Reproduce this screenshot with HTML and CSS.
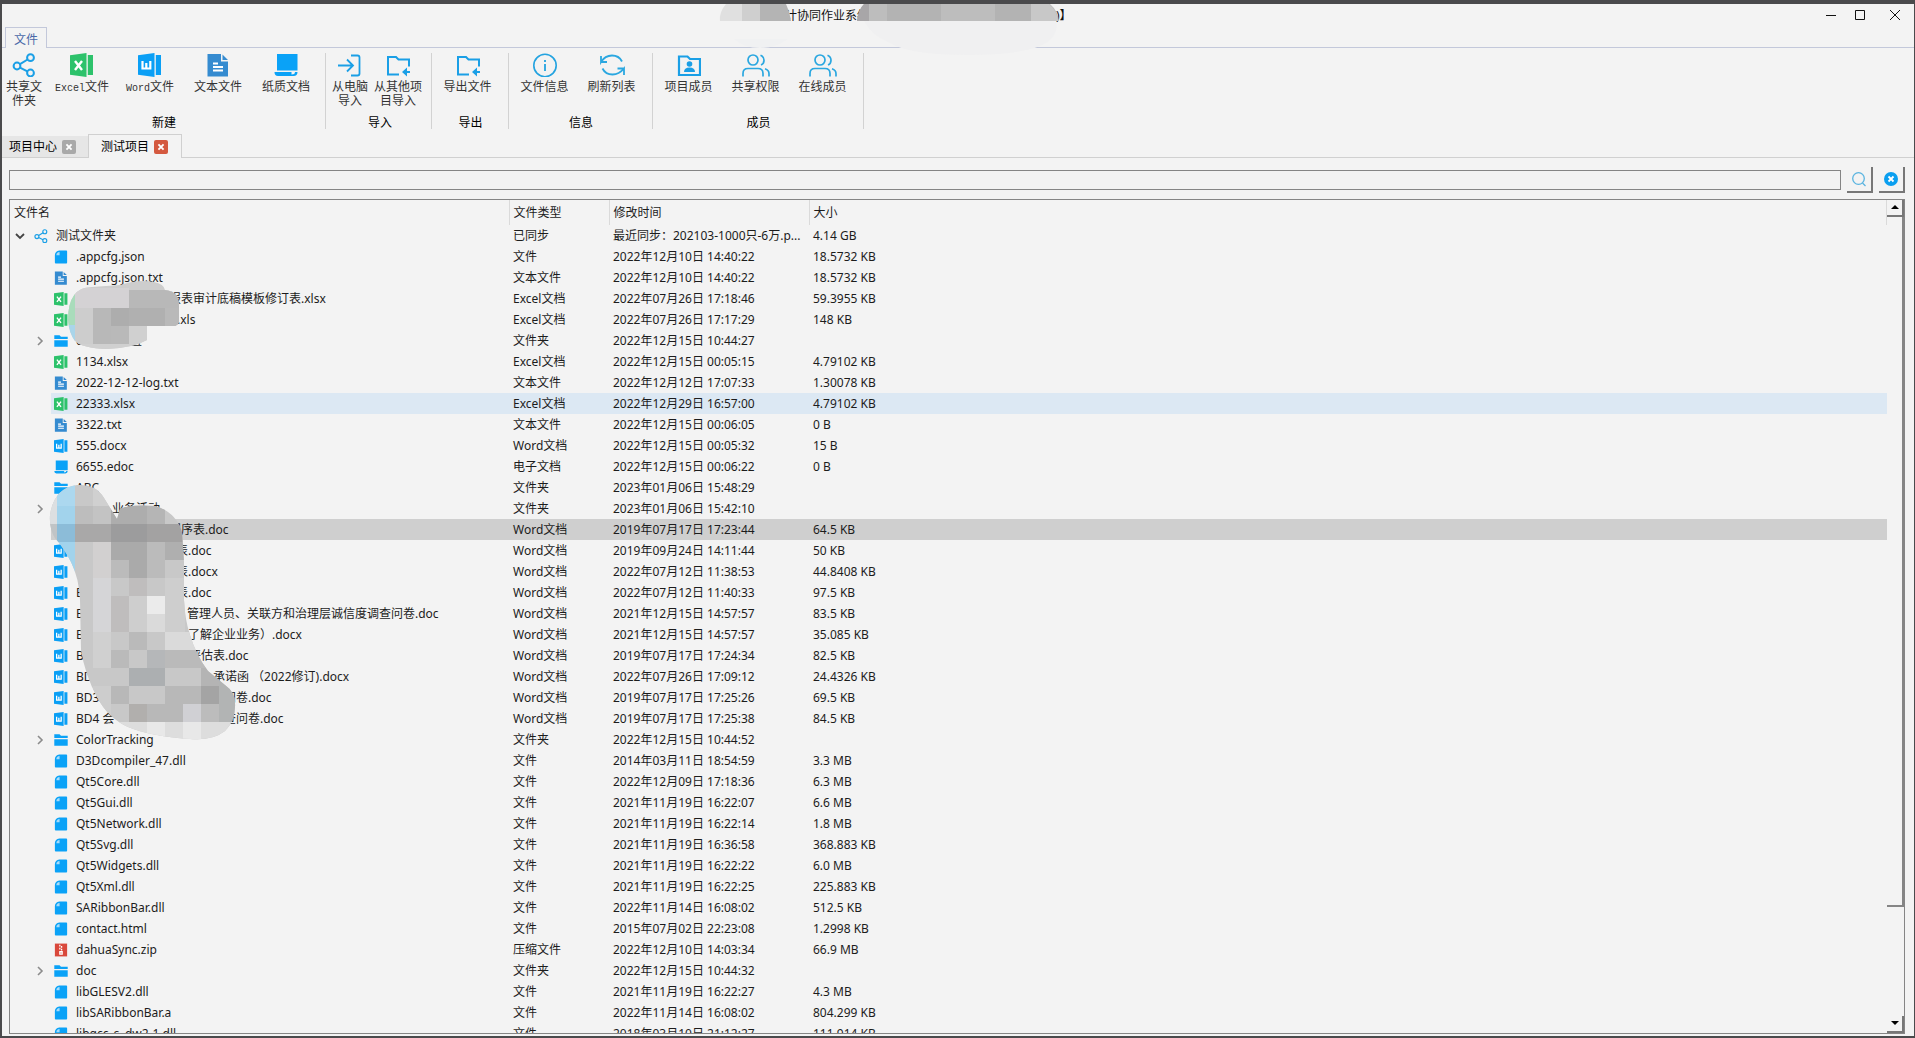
FILE: index.html
```html
<!DOCTYPE html>
<html lang="zh-CN">
<head>
<meta charset="utf-8">
<title>协同作业系统</title>
<link rel="stylesheet" href="styles.css">
</head>
<body>
<svg class="sprite" aria-hidden="true">
  <symbol id="share" viewBox="0 0 24 24"><g fill="none" stroke="#1a9fe6" stroke-width="2"><circle cx="18.5" cy="4.7" r="3.4"/><circle cx="5" cy="13" r="3.4"/><circle cx="18.5" cy="20" r="3.4"/><path d="M8 11.2l7.6-4.7M8 14.6l7.4 3.8"/></g></symbol>
  <symbol id="excel" viewBox="0 0 24 24"><path fill="#2dc26b" d="M0 2.2L16.5 0v24L0 21.8zM17.8 2H23v20h-5.2z"/><path fill="none" stroke="#fff" stroke-width="2.4" d="M5 8l7 9M12 8l-7 9"/></symbol>
  <symbol id="word" viewBox="0 0 24 24"><path fill="#0a9ff5" d="M0 2.2L16.5 0v24L0 21.8zM17.8 2H23v20h-5.2z"/><path fill="none" stroke="#fff" stroke-width="2.2" d="M4.500 8v7.500h3.800v-5.500 5.500h4V8"/></symbol>
  <symbol id="text" viewBox="0 0 24 24"><path fill="#358bd0" d="M1.5 1H15v7.5h7V23.500H1.500zM16.500 1.500L22 7h-5.500z"/><path stroke="#fff" stroke-width="2" d="M7 10.500h5M7 14h10M7 17.500h10"/></symbol>
  <symbol id="paper" viewBox="0 0 24 24"><path fill="#0aa2f7" d="M3 1h20.500v16.500H3zM.5 19h17v2.500q3.500 0 3.500-2.500h2.500q0 4-4 4H4Q.5 23 .5 19z"/></symbol>
  <symbol id="file" viewBox="0 0 24 24"><path fill="#0aa2f7" d="M9 1h12q1.500 0 1.500 1.500v19q0 1.500-1.500 1.500H3q-1.500 0-1.500-1.500V8.500Q2 2 9 1z"/><path fill="#a4dcfb" d="M4 9Q4 4 9.500 3.500V9z"/></symbol>
  <symbol id="folder" viewBox="0 0 24 24"><path fill="#0aa2f7" d="M.5 2h9l2.500 2.500h11.500v4H.5zM.5 10.500h23V22H.5z"/></symbol>
  <symbol id="zip" viewBox="0 0 24 24"><path fill="#d9483b" d="M1.500 1h21v22h-21z"/><path fill="none" stroke="#fff" stroke-width="2.200" d="M10 3v3M13 5v3M10 8v3M13 10v3M10 15h4v4h-4z"/></symbol>
  <symbol id="import" viewBox="0 0 24 24"><g fill="none" stroke="#1a9fe6" stroke-width="1.800"><path d="M0 12.500h14M9 6.500l6 6-6 6M13 2.500h6.500q2 0 2 2v16q0 2-2 2H13"/></g></symbol>
  <symbol id="folder-arrow" viewBox="0 0 24 24"><path fill="none" stroke="#1a9fe6" stroke-width="2" d="M13 21.500H2V4h8l2.500 2.500H23v7"/><path fill="#1a9fe6" d="M16 19l5-4.500V18h3.500v2H21v3.500z"/></symbol>
  <symbol id="info" viewBox="0 0 24 24"><circle cx="12" cy="12.500" r="11.200" fill="none" stroke="#23a3e0" stroke-width="1.600"/><path stroke="#23a3e0" stroke-width="1.800" d="M12 11v7M12 7v2"/></symbol>
  <symbol id="refresh" viewBox="0 0 26 24"><g fill="none" stroke="#2aa7e0" stroke-width="1.800"><path d="M23 8.500Q20 2.500 13 2.500 6 2.500 2 9V3M2 9h6M3.500 15.500Q6.500 21.500 13.500 21.500 20 21.500 25 15.500V22M25 15.500h-6.500"/></g></symbol>
  <symbol id="member" viewBox="0 0 24 24"><path fill="none" stroke="#1a9fe6" stroke-width="2.200" d="M2 22V3.500h8.500L13 6h10v16z"/><circle cx="12.500" cy="11" r="2.800" fill="#1a9fe6"/><path fill="#1a9fe6" d="M7 19q0-4.500 5.500-4.500T18 19z"/></symbol>
  <symbol id="people" viewBox="0 0 28 24"><g fill="none" stroke="#2aa7e0" stroke-width="1.700"><circle cx="11" cy="7" r="5"/><path d="M1 23.500v-3q0-5 5-5h10q5 0 5 5v3M18.500 2.200q3.500 1.500 3.500 5t-3 4.800M23 15.800q4 1.200 4 5v2.700"/></g></symbol>
  <symbol id="x" viewBox="0 0 14 14"><path stroke="#fff" stroke-width="2.200" d="M4 4l6 6M10 4l-6 6"/></symbol>
  <symbol id="right" viewBox="0 0 10 10"><path fill="none" stroke="#8c8c8c" stroke-width="1.600" d="M3 1l4 4-4 4"/></symbol>
  <symbol id="down" viewBox="0 0 10 10"><path fill="none" stroke="#444" stroke-width="1.800" d="M1 3l4 4 4-4"/></symbol>
</svg>

<div class="window">
  <header class="titlebar">
    <h1 class="title">
      <svg class="title-mosaic" width="65" height="44" viewBox="0 0 65 44" aria-hidden="true">
        <path fill="#e0e0e0" d="M6 0q-7 8-6 17h22V0z"/><path fill="#cfcfcf" d="M22 0h18v17H22z"/><path fill="#b4b4b4" d="M40 0h26q4 8 5 17H40z"/>
        <path fill="#f0f1f2" d="M14 35h54q-12 9-28 9t-26-9z"/>
      </svg>
      <span>计协同作业系统</span>
      <svg class="title-mosaic over" width="198" height="50" viewBox="0 0 198 50" aria-hidden="true">
        <path fill="#bdbdbd" d="M6 0h186q8 7 9 17H-1Q0 6 6 0z"/><path fill="#a8a6a8" d="M6 0h5v17H-1Q0 6 6 0z"/><path fill="#b3b3b3" d="M29 0h54v17H29zM137 0h36v17h-36z"/><path fill="#c8c8c8" d="M173 0h18q8 7 9 17h-27z"/>
        <path fill="#f0f0f1" d="M6 17h192q3 12-8 21-20 13-80 13T30 38Q14 32 6 17z"/>
      </svg>
      <span>)】</span>
    </h1>
    <div class="window-buttons">
      <button type="button" aria-label="最小化"><svg width="12" height="12"><path stroke="#111" d="M1 6.500h10"/></svg></button>
      <button type="button" aria-label="最大化"><svg width="12" height="12"><path fill="none" stroke="#111" d="M1.500 1.500h9v9h-9z"/></svg></button>
      <button type="button" class="close" aria-label="关闭"><svg width="12" height="12"><path stroke="#111" d="M1 1l10 10M11 1L1 11"/></svg></button>
    </div>
  </header>
  <nav class="ribbon-tabs"><button type="button" class="ribbon-tab">文件</button></nav>

  <div class="ribbon">
    <section class="group">
      <div class="tools">
        <button type="button" class="tool narrow"><svg class="icon"><use href="#share"/></svg><span>共享文件夹</span></button>
        <button type="button" class="tool wide"><svg class="icon"><use href="#excel"/></svg><span><span class="mono">Excel</span>文件</span></button>
        <button type="button" class="tool wide"><svg class="icon"><use href="#word"/></svg><span><span class="mono">Word</span>文件</span></button>
        <button type="button" class="tool wide"><svg class="icon"><use href="#text"/></svg><span>文本文件</span></button>
        <button type="button" class="tool wide"><svg class="icon"><use href="#paper"/></svg><span>纸质文档</span></button>
      </div>
      <h2>新建</h2>
    </section>
    <section class="group import">
      <div class="tools">
        <button type="button" class="tool short"><svg class="icon"><use href="#import"/></svg><span>从电脑导入</span></button>
        <button type="button" class="tool"><svg class="icon"><use href="#folder-arrow"/></svg><span>从其他项目导入</span></button>
      </div>
      <h2>导入</h2>
    </section>
    <section class="group">
      <div class="tools">
        <button type="button" class="tool medium"><svg class="icon"><use href="#folder-arrow"/></svg><span>导出文件</span></button>
      </div>
      <h2>导出</h2>
    </section>
    <section class="group">
      <div class="tools">
        <button type="button" class="tool medium"><svg class="icon"><use href="#info"/></svg><span>文件信息</span></button>
        <button type="button" class="tool medium"><svg class="icon broad"><use href="#refresh"/></svg><span>刷新列表</span></button>
      </div>
      <h2>信息</h2>
    </section>
    <section class="group">
      <div class="tools">
        <button type="button" class="tool medium"><svg class="icon"><use href="#member"/></svg><span>项目成员</span></button>
        <button type="button" class="tool medium"><svg class="icon broad"><use href="#people"/></svg><span>共享权限</span></button>
        <button type="button" class="tool medium"><svg class="icon broad"><use href="#people"/></svg><span>在线成员</span></button>
      </div>
      <h2>成员</h2>
    </section>
  </div>

  <nav class="page-tabs">
    <div class="page-tab"><a href="#center">项目中心</a><button type="button" aria-label="关闭项目中心"><svg width="12" height="12"><use href="#x"/></svg></button></div>
    <div class="page-tab active"><a href="#test">测试项目</a><button type="button" aria-label="关闭测试项目"><svg width="12" height="12"><use href="#x"/></svg></button></div>
  </nav>

  <main class="page">
    <form class="search">
      <input type="text" aria-label="搜索文件">
      <button type="button" aria-label="搜索"><svg width="16" height="16" viewBox="0 0 16 16"><g fill="none" stroke="#5ab4e0" stroke-width="1.300"><circle cx="7.500" cy="7.500" r="5.800"/><path d="M11.500 12l3 3"/></g></svg></button>
      <button type="button" aria-label="清除"><svg width="16" height="16" viewBox="0 0 16 16"><circle cx="8" cy="8" r="7" fill="#0a9ff0"/><path stroke="#fff" stroke-width="1.800" d="M5.500 5.500l5 5M10.500 5.500l-5 5"/></svg></button>
    </form>

    <div class="tree">
      <div class="viewport">
      <table>
        <colgroup><col class="c-name"><col class="c-type"><col class="c-date"><col></colgroup>
        <thead><tr><th>文件名</th><th>文件类型</th><th>修改时间</th><th>大小</th></tr></thead>
        <tbody>
        <tr class="root"><td><div class="node"><svg class="twist"><use href="#down"/></svg><span class="name"><svg><use href="#share"/></svg>测试文件夹</span></div></td><td>已同步</td><td>最近同步：202103-1000只-6万.p...</td><td>4.14 GB</td></tr>
        <tr><td><div class="node"><span class="name"><svg><use href="#file"/></svg>.appcfg.json</span></div></td><td>文件</td><td>2022年12月10日 14:40:22</td><td>18.5732 KB</td></tr>
        <tr><td><div class="node"><span class="name"><svg><use href="#text"/></svg>.appcfg.json.txt</span></div></td><td>文本文件</td><td>2022年12月10日 14:40:22</td><td>18.5732 KB</td></tr>
        <tr><td><div class="node"><span class="name"><svg><use href="#excel"/></svg><span class="pre" style="width:93px"></span>报表审计底稿模板修订表.xlsx</span></div></td><td>Excel文档</td><td>2022年07月26日 17:18:46</td><td>59.3955 KB</td></tr>
        <tr><td><div class="node"><span class="name"><svg><use href="#excel"/></svg><span class="pre" style="width:101px"></span>.xls</span></div></td><td>Excel文档</td><td>2022年07月26日 17:17:29</td><td>148 KB</td></tr>
        <tr><td><div class="node"><svg class="twist"><use href="#right"/></svg><span class="name"><svg><use href="#folder"/></svg><span class="pre" style="width:54px">0</span>置</span></div></td><td>文件夹</td><td>2022年12月15日 10:44:27</td><td></td></tr>
        <tr><td><div class="node"><span class="name"><svg><use href="#excel"/></svg>1134.xlsx</span></div></td><td>Excel文档</td><td>2022年12月15日 00:05:15</td><td>4.79102 KB</td></tr>
        <tr><td><div class="node"><span class="name"><svg><use href="#text"/></svg>2022-12-12-log.txt</span></div></td><td>文本文件</td><td>2022年12月12日 17:07:33</td><td>1.30078 KB</td></tr>
        <tr class="hover"><td><div class="node"><span class="name"><svg><use href="#excel"/></svg>22333.xlsx</span></div></td><td>Excel文档</td><td>2022年12月29日 16:57:00</td><td>4.79102 KB</td></tr>
        <tr><td><div class="node"><span class="name"><svg><use href="#text"/></svg>3322.txt</span></div></td><td>文本文件</td><td>2022年12月15日 00:06:05</td><td>0 B</td></tr>
        <tr><td><div class="node"><span class="name"><svg><use href="#word"/></svg>555.docx</span></div></td><td>Word文档</td><td>2022年12月15日 00:05:32</td><td>15 B</td></tr>
        <tr><td><div class="node"><span class="name"><svg><use href="#paper"/></svg>6655.edoc</span></div></td><td>电子文档</td><td>2022年12月15日 00:06:22</td><td>0 B</td></tr>
        <tr><td><div class="node"><span class="name"><svg><use href="#folder"/></svg>ABC</span></div></td><td>文件夹</td><td>2023年01月06日 15:48:29</td><td></td></tr>
        <tr><td><div class="node"><svg class="twist"><use href="#right"/></svg><span class="name"><svg><use href="#folder"/></svg><span class="pre" style="width:36px"></span>业务活动</span></div></td><td>文件夹</td><td>2023年01月06日 15:42:10</td><td></td></tr>
        <tr class="selected"><td><div class="node"><span class="name"><svg><use href="#word"/></svg><span class="pre" style="width:93px"></span>程序表.doc</span></div></td><td>Word文档</td><td>2019年07月17日 17:23:44</td><td>64.5 KB</td></tr>
        <tr><td><div class="node"><span class="name"><svg><use href="#word"/></svg><span class="pre" style="width:100px"></span>表.doc</span></div></td><td>Word文档</td><td>2019年09月24日 14:11:44</td><td>50 KB</td></tr>
        <tr><td><div class="node"><span class="name"><svg><use href="#word"/></svg><span class="pre" style="width:100px"></span>表.docx</span></div></td><td>Word文档</td><td>2022年07月12日 11:38:53</td><td>44.8408 KB</td></tr>
        <tr><td><div class="node"><span class="name"><svg><use href="#word"/></svg><span class="pre" style="width:100px">B</span>表.doc</span></div></td><td>Word文档</td><td>2022年07月12日 11:40:33</td><td>97.5 KB</td></tr>
        <tr><td><div class="node"><span class="name"><svg><use href="#word"/></svg><span class="pre" style="width:111px">B</span>管理人员、关联方和治理层诚信度调查问卷.doc</span></div></td><td>Word文档</td><td>2021年12月15日 14:57:57</td><td>83.5 KB</td></tr>
        <tr><td><div class="node"><span class="name"><svg><use href="#word"/></svg><span class="pre" style="width:112px">B</span>了解企业业务）.docx</span></div></td><td>Word文档</td><td>2021年12月15日 14:57:57</td><td>35.085 KB</td></tr>
        <tr><td><div class="node"><span class="name"><svg><use href="#word"/></svg><span class="pre" style="width:113px">B</span>评估表.doc</span></div></td><td>Word文档</td><td>2019年07月17日 17:24:34</td><td>82.5 KB</td></tr>
        <tr><td><div class="node"><span class="name"><svg><use href="#word"/></svg><span class="pre" style="width:137px">BD</span>承诺函 （2022修订).docx</span></div></td><td>Word文档</td><td>2022年07月26日 17:09:12</td><td>24.4326 KB</td></tr>
        <tr><td><div class="node"><span class="name"><svg><use href="#word"/></svg><span class="pre" style="width:148px">BD3</span>问卷.doc</span></div></td><td>Word文档</td><td>2019年07月17日 17:25:26</td><td>69.5 KB</td></tr>
        <tr><td><div class="node"><span class="name"><svg><use href="#word"/></svg><span class="pre" style="width:148px">BD4 会</span>查问卷.doc</span></div></td><td>Word文档</td><td>2019年07月17日 17:25:38</td><td>84.5 KB</td></tr>
        <tr><td><div class="node"><svg class="twist"><use href="#right"/></svg><span class="name"><svg><use href="#folder"/></svg>ColorTracking</span></div></td><td>文件夹</td><td>2022年12月15日 10:44:52</td><td></td></tr>
        <tr><td><div class="node"><span class="name"><svg><use href="#file"/></svg>D3Dcompiler_47.dll</span></div></td><td>文件</td><td>2014年03月11日 18:54:59</td><td>3.3 MB</td></tr>
        <tr><td><div class="node"><span class="name"><svg><use href="#file"/></svg>Qt5Core.dll</span></div></td><td>文件</td><td>2022年12月09日 17:18:36</td><td>6.3 MB</td></tr>
        <tr><td><div class="node"><span class="name"><svg><use href="#file"/></svg>Qt5Gui.dll</span></div></td><td>文件</td><td>2021年11月19日 16:22:07</td><td>6.6 MB</td></tr>
        <tr><td><div class="node"><span class="name"><svg><use href="#file"/></svg>Qt5Network.dll</span></div></td><td>文件</td><td>2021年11月19日 16:22:14</td><td>1.8 MB</td></tr>
        <tr><td><div class="node"><span class="name"><svg><use href="#file"/></svg>Qt5Svg.dll</span></div></td><td>文件</td><td>2021年11月19日 16:36:58</td><td>368.883 KB</td></tr>
        <tr><td><div class="node"><span class="name"><svg><use href="#file"/></svg>Qt5Widgets.dll</span></div></td><td>文件</td><td>2021年11月19日 16:22:22</td><td>6.0 MB</td></tr>
        <tr><td><div class="node"><span class="name"><svg><use href="#file"/></svg>Qt5Xml.dll</span></div></td><td>文件</td><td>2021年11月19日 16:22:25</td><td>225.883 KB</td></tr>
        <tr><td><div class="node"><span class="name"><svg><use href="#file"/></svg>SARibbonBar.dll</span></div></td><td>文件</td><td>2022年11月14日 16:08:02</td><td>512.5 KB</td></tr>
        <tr><td><div class="node"><span class="name"><svg><use href="#file"/></svg>contact.html</span></div></td><td>文件</td><td>2015年07月02日 22:23:08</td><td>1.2998 KB</td></tr>
        <tr><td><div class="node"><span class="name"><svg><use href="#zip"/></svg>dahuaSync.zip</span></div></td><td>压缩文件</td><td>2022年12月10日 14:03:34</td><td>66.9 MB</td></tr>
        <tr><td><div class="node"><svg class="twist"><use href="#right"/></svg><span class="name"><svg><use href="#folder"/></svg>doc</span></div></td><td>文件夹</td><td>2022年12月15日 10:44:32</td><td></td></tr>
        <tr><td><div class="node"><span class="name"><svg><use href="#file"/></svg>libGLESV2.dll</span></div></td><td>文件</td><td>2021年11月19日 16:22:27</td><td>4.3 MB</td></tr>
        <tr><td><div class="node"><span class="name"><svg><use href="#file"/></svg>libSARibbonBar.a</span></div></td><td>文件</td><td>2022年11月14日 16:08:02</td><td>804.299 KB</td></tr>
        <tr><td><div class="node"><span class="name"><svg><use href="#file"/></svg>libgcc_s_dw2-1.dll</span></div></td><td>文件</td><td>2018年03月10日 21:12:27</td><td>111.914 KB</td></tr>
        </tbody>
      </table>
      <svg class="mosaic" width="240" height="560" viewBox="10 200 240 560" aria-hidden="true">
        <defs>
          <clipPath id="blob-a"><path d="M68 320q0-33 24-33l28-2q18-6 34-3 10 2 11 8 14 1 14 16v14q0 6-6 6h-26v14q-14 8-40 9-25-1-32-8-6-8-7-21z"/></clipPath>
          <clipPath id="blob-b"><path d="M50 515Q54 488 77 485 96 484 104 498L117 519 120 509Q130 504 155 506 176 512 182 532L184 562V600Q185 620 190 635 196 655 208 671L225 685Q235 692 235 703 236 720 225 731 212 741 190 739 150 736 128 727 108 718 97 697 85 675 81 650L80 600Q79 578 71 562 64 548 55 538 49 528 50 515z"/></clipPath>
        </defs>
        <g clip-path="url(#blob-a)" shape-rendering="crispEdges">
          <path fill="#cdcdcd" d="M60 270h130v90H60z"/>
          <path fill="#a9dcbb" d="M60 280h15v45H60z"/><path fill="#a9d5ea" d="M60 325h15v30H60z"/>
          <path fill="#d4d2d4" d="M75 288h54v20H75z"/>
          <path fill="#b8b8b8" d="M129 290h54v36h-54zM93 308h18v36H93z"/><path fill="#adadad" d="M111 308h18v18h-18z"/>
          <path fill="#b0b0b0" d="M129 308h36v18h-36z"/><path fill="#b9b9b9" d="M111 326h18v18h-18zM165 308h18v18h-18z"/><path fill="#d0d0d0" d="M129 326h18v18h-18zM75 344h60v8H75z"/>
        </g>
        <g clip-path="url(#blob-b)" shape-rendering="crispEdges">
          <path fill="#c8c8c8" d="M48 480h192v262H48z"/>
          <path fill="#dcdfe1" d="M48 480h9v44h-9z"/><path fill="#acd8ef" d="M57 480h18v26H57z"/><path fill="#d0d0d0" d="M93 480h18v26H93z"/>
          <path fill="#a2d3ec" d="M57 506h18v18H57zM57 542h18v36H57z"/><path fill="#bdbdbd" d="M75 506h18v18H75z"/><path fill="#c3c3c3" d="M93 506h18v18H93z"/><path fill="#adadad" d="M111 500h36v24h-36z"/><path fill="#b5b5b5" d="M147 500h18v24h-18z"/>
          <path fill="#c0c4c6" d="M48 524h9v18h-9z"/><path fill="#8cbcd8" d="M57 524h18v18H57z"/><path fill="#a9a8a8" d="M75 524h36v18H75z"/><path fill="#9c9c9d" d="M111 524h36v18h-36z"/><path fill="#a3a2a2" d="M147 524h38v18h-38z"/>
          <path fill="#d2d0d0" d="M93 542h18v36H93z"/><path fill="#aaaaaa" d="M111 542h36v18h-36zM129 560h18v18h-18z"/><path fill="#bbbbbb" d="M147 542h18v36h-18zM111 560h18v18h-18z"/><path fill="#afafaf" d="M165 542h20v18h-20z"/>
          <path fill="#d5d5d7" d="M93 578h18v54H93z"/><path fill="#bfbdbd" d="M129 578h18v18h-18zM111 596h18v36h-18z"/><path fill="#cecece" d="M129 596h18v36h-18zM165 578h20v54h-20z"/><path fill="#ebebeb" d="M147 596h18v18h-18z"/><path fill="#dadada" d="M147 614h18v18h-18zM165 632h36v18h-36z"/>
          <path fill="#d0d0d0" d="M93 632h18v36H93z"/><path fill="#bababa" d="M129 632h18v18h-18zM111 650h18v18h-18zM165 650h54v18h-54z"/><path fill="#b5b7b9" d="M147 650h18v18h-18z"/>
          <path fill="#acafb1" d="M129 668h36v18h-36z"/><path fill="#b4b4b4" d="M201 668h18v18h-18z"/>
          <path fill="#cdcdcd" d="M93 686h18v36H93z"/><path fill="#b8b8b8" d="M111 686h18v18h-18zM165 686h36v18h-36zM147 704h36v18h-36z"/><path fill="#a4a4a4" d="M201 686h18v18h-18z"/><path fill="#b2b4b4" d="M219 680h18v42h-18z"/><path fill="#b1afad" d="M129 704h18v18h-18z"/><path fill="#d0d0d4" d="M183 704h18v18h-18z"/><path fill="#bcbcbc" d="M201 704h18v18h-18z"/>
          <path fill="#dddddd" d="M93 722h146v20H93z"/><path fill="#e8e8e8" d="M147 722h18v20h-18zM183 722h18v20h-18z"/>
        </g>
      </svg>
      </div>
      <div class="scrollbar">
        <button type="button" class="step" aria-label="向上滚动"><svg width="8" height="5"><path d="M4 0l4 4H0z"/></svg></button>
        <div class="thumb"></div>
        <div class="track"></div>
        <button type="button" class="step" aria-label="向下滚动"><svg width="8" height="5"><path d="M0 0h8L4 4z"/></svg></button>
      </div>
    </div>
  </main>
</div>
</body>
</html>
```
FILE: styles.css
```css
* { box-sizing: border-box; }

body {
  margin: 0;
  background: #f3f3f3;
  color: #1c1c1c;
  font: 12px/16px "Noto Sans", "Noto Sans CJK SC", sans-serif;
}

button { margin: 0; padding: 0; border: 0; background: none; color: inherit; font: inherit; }
a { color: inherit; text-decoration: none; }
h1, h2 { margin: 0; font-size: 12px; font-weight: 400; }
svg { display: block; }
.sprite { position: absolute; width: 0; height: 0; }

.window {
  display: flex;
  flex-direction: column;
  height: 100vh;
  overflow: hidden;
  border: solid #4a4a4c;
  border-width: 4px 1px 2px 2px;
}

/* Title bar */
.titlebar { display: flex; justify-content: space-between; height: 23px; }
.title { display: flex; height: 23px; margin-left: 718px; line-height: 23px; white-space: nowrap; color: #111; }
.title-mosaic { position: relative; z-index: 1; flex: none; overflow: visible; }
.title-mosaic.over { margin-left: -11px; }
.window-buttons { display: flex; gap: 17px; height: 22px; margin-right: 13px; }
.window-buttons .close { margin-left: 6px; }

.ribbon-tabs { display: flex; height: 21px; flex: none; padding-left: 3px; border-bottom: 1px solid #c3c8da; }
.ribbon-tab { width: 42px; height: 21px; border: 1px solid #c3c8da; border-bottom: 0; background: #f3f3f3; color: #4a68a8; line-height: 23px; }

/* Ribbon */
.ribbon { display: flex; flex: none; height: 86px; padding: 5px 0; }
.group { display: flex; flex-direction: column; justify-content: space-between; padding: 0 7px 0 2px; border-right: 1px solid #d2d2d2; }
.group:first-child { padding: 0 5px 0 0; }
.group.import { padding: 0 9px 0 0; }
.group h2 { padding-left: 6px; text-align: center; line-height: 12px; color: #000; }
.group.import h2 { padding-left: 12px; }
.tools { display: flex; align-items: flex-start; }
.tool { display: flex; flex-direction: column; align-items: center; width: 48px; line-height: 14px; color: #333; }
.tool.wide { width: 68px; }
.tool.medium { width: 67px; }
.tool.narrow { width: 46px; padding: 0 6px 0 4px; }
.tool.short { padding: 0 6px; }
.icon { width: 24px; height: 24px; margin-bottom: 3px; }
.icon.broad { width: 28px; }
.mono { font: 10px/14px "Liberation Mono", monospace; }

/* Open pages */
.page-tabs { display: flex; align-items: flex-end; flex: none; height: 24px; border-bottom: 1px solid #d0d0d0; }
.page-tab { display: flex; align-items: center; gap: 5px; height: 21px; padding: 0 12px 0 7px; background: #e6e6e6; color: #000; }
.page-tab.active { height: 24px; margin-bottom: -1px; padding: 0 13px 0 12px; border: 1px solid #d0d0d0; border-bottom: 0; background: #f3f3f3; }
.page-tab button { padding: 1px; border-radius: 2px; background: #a9a9a9; }
.page-tab.active button { background: #d4593f; }

/* Search */
.page { display: flex; flex: 1; flex-direction: column; gap: 6px; min-height: 0; padding: 9px 9px 2px 7px; }
.search { display: flex; align-items: center; gap: 6px; }
.search input { flex: 1; height: 20px; padding: 0 4px; border: 1px solid #858585; background: #f3f3f3; font: inherit; }
.search button { display: grid; place-items: center; width: 26px; height: 26px; border: solid #777; border-width: 0 2px 2px 0; }

/* File tree */
.tree { display: flex; flex: 1; min-height: 0; border: 1px solid #858585; }
.viewport { position: relative; flex: 1; overflow: hidden; }
table { width: 100%; border-collapse: collapse; table-layout: fixed; }
.c-name { width: 499px; }
.c-type { width: 100px; }
.c-date { width: 200px; }
th { height: 25px; padding: 0 4px; border-right: 1px solid #dadada; font-weight: 400; text-align: left; }
td { height: 21px; padding: 0 4px; white-space: nowrap; line-height: 21px; }
td:first-child { padding: 0; }
.node { display: flex; align-items: center; justify-content: flex-end; height: 21px; }
.twist { width: 10px; height: 10px; margin-right: 6px; }
.name { display: flex; align-items: center; flex: none; width: calc(100% - 41px); height: 21px; padding-left: 3px; }
.name svg { flex: none; width: 14px; height: 14px; margin-right: 8px; }
.root .name { width: calc(100% - 21px); }
.pre { flex: none; }
.hover td:not(:first-child), .hover .name { background: #dce8f3; }
.selected td:not(:first-child), .selected .name { background: #cfcfcf; }
.mosaic { position: absolute; top: 0; left: 0; pointer-events: none; }

.scrollbar { display: flex; flex-direction: column; width: 17px; }
.step { display: grid; place-items: center; height: 17px; flex: none; border: solid #777; border-width: 0 2px 2px 0; }
.thumb { flex: 690; border: solid #858585; border-width: 0 2px 2px 0; }
.track { flex: 109; }
```
